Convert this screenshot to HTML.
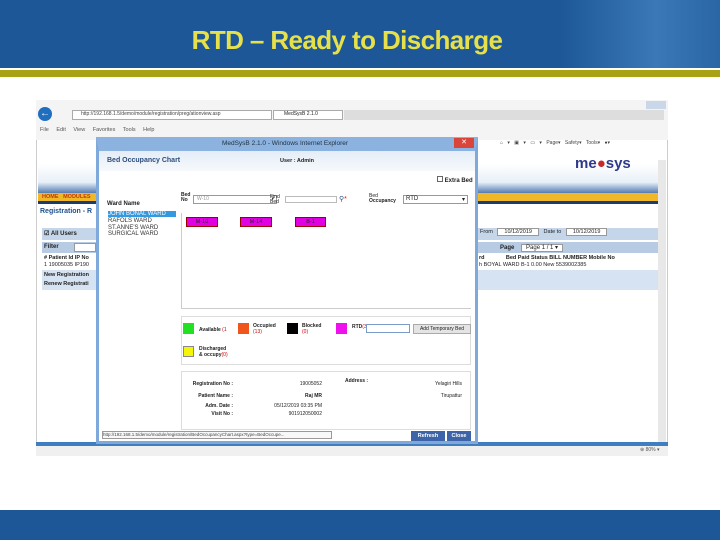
<!DOCTYPE html>
<html><head><style>
*{margin:0;padding:0;box-sizing:border-box}
body{width:720px;height:540px;position:relative;overflow:hidden;background:#fff;font-family:"Liberation Sans",sans-serif;font-size:6px;color:#222}
.a{position:absolute}
.b{font-weight:bold}
</style></head><body>
<div class="a" style="left:0;top:0;width:720px;height:68px;background:#1d5797"></div>
<div class="a" style="left:560px;top:0;width:160px;height:68px;background:linear-gradient(90deg,#1d5797,#3a78b8 60%,#2a66a6)"></div>
<div class="a" style="left:0;top:68px;width:720px;height:2px;background:#fff"></div>
<div class="a" style="left:0;top:70px;width:720px;height:7px;background:#a9a214"></div>
<div class="a" style="left:0;top:25px;width:694px;text-align:center;font-size:26px;font-weight:bold;letter-spacing:-0.6px;color:#e6e04a;font-family:'Liberation Sans',sans-serif">RTD – Ready to Discharge</div>
<div class="a" style="left:0;top:510px;width:720px;height:30px;background:#1d5797"></div>

<!-- browser -->
<div class="a" style="left:36px;top:100px;width:632px;height:356px;background:#fff;border:1px solid #ccc"></div>
<div class="a" style="left:36px;top:100px;width:632px;height:40px;background:#f4f4f4"></div>
<div class="a" style="left:38px;top:107px;width:14px;height:14px;border-radius:50%;background:#1f6ec0;color:#fff;font-size:10px;text-align:center;line-height:14px">←</div>
<div class="a" style="left:72px;top:110px;width:200px;height:10px;border:1px solid #aaa;background:#fff;font-size:5px;padding-left:8px;color:#444">http://192.168.1.5/demo/module/registration/preg/ationview.asp</div>
<div class="a" style="left:273px;top:110px;width:70px;height:10px;border:1px solid #aaa;background:#fff;font-size:5px;padding-left:10px">MedSysB 2.1.0</div>
<div class="a" style="left:344px;top:110px;width:320px;height:10px;background:#ddd"></div>
<div class="a" style="left:646px;top:101px;width:20px;height:8px;background:#c9d7e9"></div>
<div class="a" style="left:40px;top:127px;font-size:5.5px;color:#555;word-spacing:6px">File Edit View Favorites Tools Help</div>
<div class="a" style="left:500px;top:140px;font-size:5px;color:#444;word-spacing:3px">⌂ ▾ ▣ ▾ ▭ ▾ Page▾ Safety▾ Tools▾ ●▾</div>
<div class="a" style="left:38px;top:150px;width:620px;height:46px;background:linear-gradient(180deg,#fff,#fff 30%,#e8f0f8 70%,#2b5c9c)"></div>
<div class="a" style="left:575px;top:155px;font-size:15px;font-weight:bold;color:#2d3a8c">me<span style="color:#c62a2a">●</span>sys</div>
<div class="a" style="left:38px;top:193px;width:620px;height:8px;background:#f0b829"></div>
<div class="a" style="left:42px;top:194px;font-size:5.5px;color:#c0390b"><b>HOME &nbsp; MODULES</b></div>
<div class="a" style="left:38px;top:201px;width:620px;height:3px;background:#1b3d6e"></div>
<div class="a" style="left:40px;top:208px;font-size:7px;color:#1f4f8b"><b>Registration - R</b></div>
<div class="a" style="left:42px;top:228px;width:620px;height:12px;background:#c5d6ea"></div>
<div class="a" style="left:44px;top:230px;font-size:6px"><b>☑ All Users</b></div>
<div class="a" style="left:480px;top:229px;font-size:5.5px">From &nbsp; <span style="border:1px solid #999;background:#fff;padding:0 6px">10/12/2019</span> &nbsp; Date to &nbsp; <span style="border:1px solid #999;background:#fff;padding:0 6px">10/12/2019</span></div>
<div class="a" style="left:42px;top:242px;width:620px;height:11px;background:#b7cbe3"></div>
<div class="a" style="left:44px;top:244px;font-size:6px"><b>Filter</b></div>
<div class="a" style="left:74px;top:243px;width:22px;height:9px;background:#fff;border:1px solid #999"></div>
<div class="a" style="left:500px;top:244px;font-size:6px"><b>Page</b> &nbsp;&nbsp; <span style="border:1px solid #999;background:#fff;padding:0 4px">Page 1 / 1 ▾</span></div>
<div class="a" style="left:42px;top:254px;width:620px;height:16px;background:#fff"></div>
<div class="a" style="left:44px;top:255px;font-size:5.5px"><b># Patient Id IP No</b></div>
<div class="a" style="left:44px;top:262px;font-size:5.5px">1 19005035 IP190</div>
<div class="a" style="left:479px;top:255px;font-size:5.5px"><b>rd &nbsp;&nbsp;&nbsp;&nbsp;&nbsp;&nbsp;&nbsp;&nbsp;&nbsp;&nbsp;&nbsp;&nbsp; Bed Paid Status BILL NUMBER Mobile No</b></div>
<div class="a" style="left:479px;top:262px;font-size:5.5px">h BOYAL WARD B-1 0.00 New 5539002385</div>
<div class="a" style="left:42px;top:270px;width:620px;height:20px;background:#d6e3f2"></div>
<div class="a" style="left:44px;top:272px;font-size:5.5px"><b>New Registration</b></div>
<div class="a" style="left:44px;top:281px;font-size:5.5px"><b>Renew Registrati</b></div>
<div class="a" style="left:658px;top:160px;width:8px;height:282px;background:#e8e8e8"></div>
<div class="a" style="left:36px;top:442px;width:632px;height:4px;background:#3f7fc0"></div>
<div class="a" style="left:36px;top:446px;width:632px;height:10px;background:#f0f0f0"></div>
<div class="a" style="left:640px;top:447px;font-size:5px;color:#555">⊕ 80% ▾</div>

<!-- popup -->
<div class="a" style="left:96px;top:137px;width:382px;height:307px;background:#fff;border:3px solid #7fa9da;border-top:14px solid #8cb2df"></div>
<div class="a" style="left:100px;top:140px;width:370px;text-align:center;font-size:6.5px;color:#234">MedSysB 2.1.0 - Windows Internet Explorer</div>
<div class="a" style="left:454px;top:138px;width:20px;height:10px;background:#d9453a;color:#fff;font-size:7px;text-align:center">✕</div>
<div class="a" style="left:99px;top:151px;width:376px;height:20px;background:linear-gradient(#e4edf7,#f6f9fc)"></div>
<div class="a" style="left:107px;top:157px;font-size:7px;color:#2b4d7d"><b>Bed Occupancy Chart</b></div>
<div class="a" style="left:280px;top:158px;font-size:5.5px"><b>User : Admin</b></div>
<div class="a" style="left:437px;top:176px;font-size:6px"><span style="display:inline-block;width:6px;height:6px;border:1px solid #666"></span> <b>Extra Bed</b></div>
<div class="a" style="left:107px;top:201px;font-size:6px"><b>Ward Name</b></div>
<div class="a" style="left:108px;top:211px;width:68px;height:6px;background:#3399e0;color:#fff;font-size:6px;line-height:6px">JOHN BONAL WARD</div>
<div class="a" style="left:108px;top:218px;font-size:6px;line-height:6.5px;color:#333">RAFOLS WARD<br>ST.ANNE'S WARD<br>SURGICAL WARD</div>
<div class="a" style="left:181px;top:213px;width:1px;height:95px;background:#ccc"></div>
<div class="a" style="left:181px;top:193px;font-size:5px;line-height:5px"><b>Bed<br>No</b></div>
<div class="a" style="left:193px;top:195px;width:84px;height:9px;border:1px solid #999;background:#fff;font-size:5px;color:#999;padding-left:3px">W-10 <span style="float:right;padding-right:2px;color:#333">▾</span></div>
<div class="a" style="left:270px;top:195px;font-size:5px;line-height:5px">Find<br>Bed</div>
<div class="a" style="left:285px;top:196px;width:52px;height:7px;border:1px solid #bbb"></div>
<div class="a" style="left:339px;top:195px;font-size:7px;color:#2b4d7d">⚲<span style="color:red">*</span></div>
<div class="a" style="left:369px;top:194px;font-size:5px;line-height:5px">Bed<br><b>Occupancy</b></div>
<div class="a" style="left:403px;top:195px;width:65px;height:9px;border:1px solid #999;background:#fff;font-size:6px;padding-left:2px">RTD <span style="float:right;padding-right:2px">▾</span></div>
<div class="a" style="left:186px;top:217px;width:32px;height:10px;background:#e100e1;border:1px solid #900;font-size:5.5px;text-align:center;line-height:8px">M-10</div>
<div class="a" style="left:240px;top:217px;width:32px;height:10px;background:#e100e1;border:1px solid #900;font-size:5.5px;text-align:center;line-height:8px">M-14</div>
<div class="a" style="left:295px;top:217px;width:31px;height:10px;background:#e100e1;border:1px solid #900;font-size:5.5px;text-align:center;line-height:8px">B-1</div>
<div class="a" style="left:181px;top:308px;width:290px;height:1px;background:#ccc"></div>
<div class="a" style="left:181px;top:316px;width:290px;height:49px;border:1px solid #ddd"></div>
<div class="a" style="left:183px;top:323px;width:11px;height:11px;background:#22e022"></div>
<div class="a" style="left:199px;top:327px;font-size:5px"><b>Available</b> <span style="color:#c00">(1</span></div>
<div class="a" style="left:238px;top:323px;width:11px;height:11px;background:#f0561c"></div>
<div class="a" style="left:253px;top:324px;font-size:5px;line-height:5.5px"><b>Occupied</b><br><span style="color:#c00">(13)</span></div>
<div class="a" style="left:287px;top:323px;width:11px;height:11px;background:#000"></div>
<div class="a" style="left:302px;top:324px;font-size:5px;line-height:5.5px"><b>Blocked</b><br><span style="color:#c00">(0)</span></div>
<div class="a" style="left:336px;top:323px;width:11px;height:11px;background:#ee11ee"></div>
<div class="a" style="left:352px;top:324px;font-size:5px"><b>RTD</b><span style="color:#c00">(3</span></div>
<div class="a" style="left:366px;top:324px;width:44px;height:9px;border:1px solid #7a9cc8"></div>
<div class="a" style="left:413px;top:324px;width:58px;height:10px;background:#e4e4e4;border:1px solid #aaa;font-size:5px;text-align:center;line-height:8px">Add Temporary Bed</div>
<div class="a" style="left:183px;top:346px;width:11px;height:11px;background:#f5f50c;border:1px solid #888"></div>
<div class="a" style="left:199px;top:347px;font-size:5px;line-height:5.5px"><b>Discharged</b><br><b>&amp; occupy</b><span style="color:#c00">(0)</span></div>
<div class="a" style="left:181px;top:371px;width:290px;height:59px;border:1px solid #ddd;font-size:5px"></div>
<div class="a" style="left:185px;top:378px;font-size:5px;line-height:12px;text-align:right;width:48px"><b>Registration No :<br>Patient Name :</b></div>
<div class="a" style="left:185px;top:403px;font-size:5px;text-align:right;width:48px"><b>Adm. Date :</b></div>
<div class="a" style="left:185px;top:411px;font-size:5px;text-align:right;width:48px"><b>Visit No :</b></div>
<div class="a" style="left:230px;top:378px;font-size:5px;line-height:12px;text-align:right;width:92px">19005052<br><b>Raj MR</b></div>
<div class="a" style="left:230px;top:403px;font-size:5px;text-align:right;width:92px">05/12/2019 03:35 PM</div>
<div class="a" style="left:230px;top:411px;font-size:5px;text-align:right;width:92px">901912050002</div>
<div class="a" style="left:345px;top:378px;font-size:5px"><b>Address :</b></div>
<div class="a" style="left:400px;top:378px;font-size:5px;line-height:12px;text-align:right;width:62px">Yelagiri Hills<br>Tirupattur</div>
<div class="a" style="left:102px;top:431px;width:230px;height:8px;border:1px solid #999;background:#f8f8f8;font-size:4.5px;color:#444">http://192.168.1.5/demo/module/registration/BedOccupancyChart.aspx?type=BedOccupe...</div>
<div class="a" style="left:411px;top:431px;width:34px;height:10px;background:#3d63a8;color:#fff;font-size:5.5px;text-align:center;line-height:10px"><b>Refresh</b></div>
<div class="a" style="left:447px;top:431px;width:24px;height:10px;background:#3d63a8;color:#fff;font-size:5.5px;text-align:center;line-height:10px"><b>Close</b></div>
</body></html>
